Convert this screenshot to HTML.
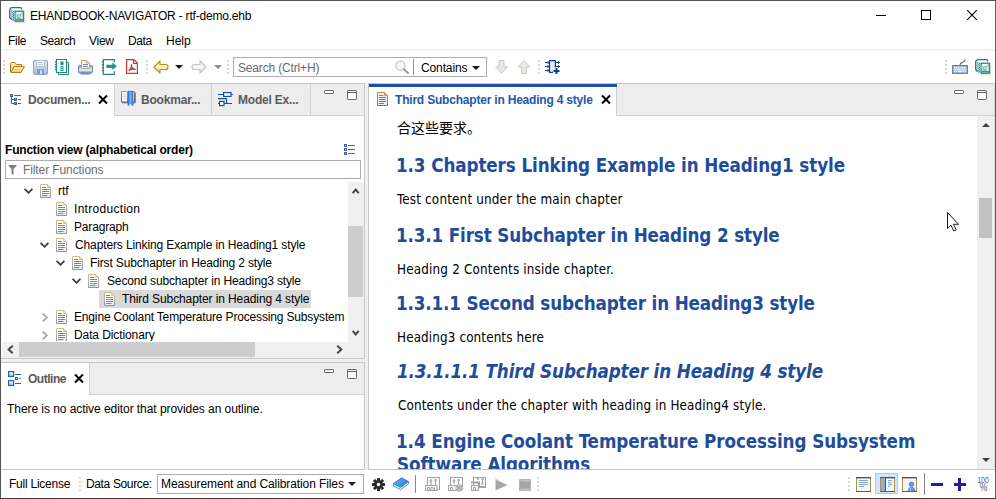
<!DOCTYPE html>
<html><head><meta charset="utf-8"><title>EHANDBOOK-NAVIGATOR - rtf-demo.ehb</title>
<style>
*{box-sizing:border-box;margin:0;padding:0}
html,body{width:996px;height:499px;overflow:hidden;background:#fff}
body{position:relative;font-family:"Liberation Sans","Noto Sans CJK SC",sans-serif;font-size:12px;color:#000}
.abs{position:absolute}
.t{position:absolute;white-space:nowrap;line-height:16px;height:16px;letter-spacing:-0.17px}
.tab{position:absolute;white-space:nowrap;line-height:16px;height:16px;font-weight:bold;font-size:12px;color:#5a5a5a;letter-spacing:-0.1px}
.hd{position:absolute;left:397px;white-space:nowrap;font-family:"DejaVu Sans Condensed","Liberation Sans",sans-serif;font-weight:bold;color:#1e4d9b;font-size:18.67px;line-height:23px;height:23px;letter-spacing:-0.12px}
.bd{position:absolute;left:397px;white-space:nowrap;font-family:"DejaVu Sans Condensed","Liberation Sans","Noto Sans CJK SC",sans-serif;font-size:13.33px;line-height:16px;height:16px;color:#000}
.sep{position:absolute;width:2px;height:15px;background-image:linear-gradient(#d9d9d9 50%,transparent 50%);background-size:2px 4px}
.hdr{position:absolute;background:#ededed}
.ln{position:absolute;background:#c6c6c6}
svg{position:absolute;overflow:visible}
.row{position:absolute;left:0;height:18px;width:345px}
#title{letter-spacing:-0.200px}
#m_file{letter-spacing:-0.280px;margin-left:-1.00px}
#m_search{letter-spacing:-0.460px}
#m_view{letter-spacing:-0.260px}
#m_data{letter-spacing:-0.360px}
#m_help{letter-spacing:-0.040px}
#srch{letter-spacing:-0.160px}
#cont{letter-spacing:-0.120px;margin-left:1.00px}
#tab1{letter-spacing:-0.220px}
#tab2{letter-spacing:-0.200px}
#tab3{letter-spacing:-0.200px}
#tab4{letter-spacing:-0.480px}
#edtab{letter-spacing:-0.200px}
#fv{letter-spacing:-0.200px}
#ff{letter-spacing:-0.100px}
#t_rtf{letter-spacing:-0.100px;margin-left:-1.00px}
#t_intro{letter-spacing:0.300px}
#t_para{letter-spacing:-0.160px}
#t_chap{letter-spacing:-0.120px;margin-left:1.00px}
#t_first{letter-spacing:-0.140px}
#t_second{letter-spacing:-0.140px;margin-left:1.00px}
#t_third{letter-spacing:-0.100px}
#t_eng{letter-spacing:-0.160px}
#t_data{letter-spacing:-0.100px}
#noed{letter-spacing:-0.060px}
#fl{letter-spacing:-0.240px}
#ds{letter-spacing:-0.360px}
#mc{letter-spacing:-0.100px}
#h1{letter-spacing:-0.100px;margin-left:-1.00px}
#h2{letter-spacing:-0.140px;margin-left:-1.00px}
#h3{letter-spacing:-0.140px;margin-left:-1.00px}
#h4{letter-spacing:-0.120px}
#h5{letter-spacing:-0.080px;margin-left:-1.00px}
#h6{letter-spacing:-0.100px}
#b1{letter-spacing:0.180px}
#b2{letter-spacing:0.180px}
#b3{letter-spacing:0.120px}
#b4{letter-spacing:0.140px;margin-left:1.00px}
</style></head><body>
<!-- window borders -->
<div class="abs" style="left:0;top:0;width:996px;height:1px;background:#555"></div>
<div class="abs" style="left:0;top:0;width:1px;height:499px;background:#555"></div>
<div class="abs" style="left:995px;top:0;width:1px;height:499px;background:#5e5e5e"></div>
<div class="abs" style="left:0;top:498px;width:996px;height:1px;background:#3c3c3c"></div>
<!-- TITLE BAR -->
<svg width="0" height="0"><defs><g id="appicon">
<path d="M12.600 2.600 V2 Q12.600 0.700 11.300 0.700 H3 Q0.700 0.700 0.700 3.200 V9.500 Q0.700 12.200 3.400 12.200" fill="none" stroke="#1a7f78" stroke-width="1.300"/>
<path d="M2.400 2.800 Q2 6 2.400 10.500" fill="none" stroke="#4fa79e" stroke-width="0.900"/>
<path d="M15.700 4 V15.700 H6" fill="none" stroke="#bdbdbd" stroke-width="0.800"/>
<rect x="4.600" y="3.300" width="10.600" height="12" fill="#fff"/>
<path d="M3.400 4 L5 4.800 L3.400 5.600 M3.400 6 L5 6.800 L3.400 7.600 M3.400 8 L5 8.800 L3.400 9.600 M3.400 10 L5 10.800 L3.400 11.600 M3.400 12 L5 12.800 L3.400 13.600" fill="#fff" stroke="#1a7f78" stroke-width="0.800"/>
<rect x="6.100" y="4.200" width="8.200" height="10" fill="#f4fbfa" stroke="#1a7f78" stroke-width="1.200"/>
<path d="M6.700 13.600 L9 9 L13.700 4.800 L13.700 7 L10.500 9.500 L13.700 13.600 Z" fill="#6dbdb3" opacity="0.750"/>
<path d="M6.700 5 L9.500 8.500 L6.700 13" fill="#9fd6ce" opacity="0.800"/>
<circle cx="10" cy="9.200" r="1.400" fill="#e9f7f4" stroke="#3ea195" stroke-width="0.700"/>
<path d="M6.500 12.800 H14" stroke="#1a7f78" stroke-width="1.100"/>
</g></defs></svg>
<svg id="app1" style="left:9px;top:7px" width="16" height="16" viewBox="0 0 16 16"><use href="#appicon"/></svg>

<div id="title" class="t" style="left:30px;top:8px">EHANDBOOK-NAVIGATOR - rtf-demo.ehb</div>
<svg style="left:876px;top:15px" width="10" height="1"><rect x="0" y="0" width="10" height="1" fill="#000"/></svg>
<svg style="left:921px;top:10px" width="10" height="10"><rect x="0.500" y="0.500" width="9" height="9" fill="none" stroke="#000" stroke-width="1"/></svg>
<svg style="left:967px;top:10px" width="10" height="10"><path d="M0.200 0.200 L9.800 9.800 M9.800 0.200 L0.200 9.800" stroke="#000" stroke-width="1.100" fill="none"/></svg>
<!-- MENU -->
<div class="t" id="m_file" style="left:9px;top:33px">File</div>
<div class="t" id="m_search" style="left:40px;top:33px">Search</div>
<div class="t" id="m_view" style="left:89px;top:33px">View</div>
<div class="t" id="m_data" style="left:128px;top:33px">Data</div>
<div class="t" id="m_help" style="left:166px;top:33px">Help</div>
<div class="abs" style="left:2px;top:49px;width:992px;height:2px;background:#f0f0f0"></div>

<!-- TOOLBAR -->
<div class="sep" style="left:3px;top:60px"></div>
<svg id="tb-open" style="left:10px;top:62px" width="15" height="11" viewBox="0 0 15 11"><defs><linearGradient id="gfo" x1="0" y1="0" x2="0" y2="1"><stop offset="0" stop-color="#fdf0c0"/><stop offset="1" stop-color="#f5c766"/></linearGradient></defs><path d="M0.5 10 V1.5 Q0.5 0.5 1.5 0.5 H5 L6.5 2.5 H11.5 V5" fill="url(#gfo)" stroke="#b8761f"/><path d="M0.8 10.5 L4 4.5 H14.5 L11 10.5 Z" fill="url(#gfo)" stroke="#b8761f" stroke-linejoin="round"/></svg>
<svg id="tb-save" style="left:33px;top:60px" width="15" height="15" viewBox="0 0 15 15"><defs><linearGradient id="gsv" x1="0" y1="0" x2="0" y2="1"><stop offset="0" stop-color="#e3e9f6"/><stop offset="1" stop-color="#a9b9dc"/></linearGradient></defs><rect x="0.5" y="0.5" width="14" height="14" rx="1.5" fill="url(#gsv)" stroke="#8c9fc9"/><rect x="3.5" y="0.5" width="8" height="6" fill="#f3f5f8" stroke="#b7bfcf"/><path d="M5 2.5 H10 M5 4.5 H10" stroke="#c4cad6"/><rect x="4.5" y="9.500" width="6" height="5" fill="#7f95cf" stroke="#8c9fc9"/><rect x="7" y="10.500" width="2" height="3.500" fill="#dfe6f5"/></svg>
<svg id="tb-nb" style="left:54px;top:59px" width="15" height="16" viewBox="0 0 15 16"><path d="M4.500 3.500 H14.500 V15.500 H4.500 Z" fill="#fff" stroke="#1f8a80"/><path d="M2.500 0.500 H12.500 V13.500 H2.500 Z" fill="#fff" stroke="#1f8a80" stroke-width="1.200"/><path d="M1 3 H3 M1 5.500 H3 M1 8 H3 M1 10.500 H3" stroke="#1f8a80" stroke-width="1.300"/><rect x="6.500" y="2.500" width="3" height="3.500" fill="#1f8a80"/><rect x="6.500" y="7" width="3" height="5" fill="#2a9a8e"/><path d="M7 8.500 H9 M7 10.500 H9" stroke="#d0eeea" stroke-width="0.800"/></svg>
<svg id="tb-print" style="left:78px;top:60px" width="15" height="15" viewBox="0 0 15 15"><defs><linearGradient id="gpr" x1="0" y1="0" x2="0" y2="1"><stop offset="0" stop-color="#7a96d2"/><stop offset="0.600" stop-color="#eef2fa"/><stop offset="1" stop-color="#6f8bc9"/></linearGradient></defs><path d="M0.500 6.500 Q0.500 5.500 1.500 5.500 H13.500 Q14.500 5.500 14.500 6.500 V12 Q14.500 13 13.500 13 H1.500 Q0.500 13 0.500 12 Z" fill="url(#gpr)" stroke="#6c88c6"/><path d="M2 13.200 H13 L12 14.600 H3 Z" fill="#5f7cc0"/><path d="M3.500 8.500 V0.500 H8.500 L11.500 3 V8.500 Z" fill="#fcfcfc" stroke="#c2a463"/><path d="M8.500 0.500 V3 H11.500" fill="#f2e6c4" stroke="#c2a463"/><path d="M5 4.500 H10 M5 6.500 H10" stroke="#6c88c6" stroke-width="1.200"/></svg>
<svg id="tb-exp" style="left:101px;top:59px" width="16" height="16" viewBox="0 0 16 16"><path d="M13.200 3.500 V0.700 H2.300 V15.300 H13.200 V12" fill="#fff" stroke="#1f8a80" stroke-width="1.200"/><path d="M0.800 3 H3 M0.800 5.800 H3 M0.800 8.600 H3 M0.800 11.400 H3" stroke="#1f8a80" stroke-width="1.400"/><path d="M5.300 5.700 H11.300 V3.600 L16 7.300 L11.300 11 V8.900 H5.300 Z" fill="#2a958b"/></svg>
<svg id="tb-pdf" style="left:126px;top:59px" width="12" height="15" viewBox="0 0 12 15"><path d="M0.600 0.600 H8 L11.400 4 V14.400 H0.600 Z" fill="#fff" stroke="#c9393c" stroke-width="1.200"/><path d="M7.600 0.600 V4.400 H11.400" fill="none" stroke="#c9393c" stroke-width="1.200"/><path d="M5.600 5.600 Q6.200 8.600 3 11.600 M5.800 8.400 Q7 10 9.300 10.300 M3.300 11.300 Q6 9.700 9 10.300" fill="none" stroke="#c9393c" stroke-width="1.300" stroke-linecap="round"/></svg>
<div class="sep" style="left:146px;top:60px"></div>
<svg id="tb-back" style="left:153px;top:60px" width="16" height="14" viewBox="0 0 16 14"><defs><linearGradient id="gbk" x1="0" y1="0" x2="0" y2="1"><stop offset="0" stop-color="#fffdf0"/><stop offset="0.500" stop-color="#fff3b8"/><stop offset="1" stop-color="#fbd96a"/></linearGradient></defs><path d="M7 1 L1 7 L7 13 V9.500 H13 Q15 9.500 15 7 Q15 4.500 13 4.500 H7 Z" fill="url(#gbk)" stroke="#c98a1c" stroke-width="1.200" stroke-linejoin="round"/></svg>
<svg style="left:175px;top:65px" width="8" height="4"><path d="M0 0 H8 L4 4 Z" fill="#1a1a1a"/></svg>
<svg id="tb-fwd" style="left:191px;top:60px" width="16" height="14" viewBox="0 0 16 14"><path d="M9 1 L15 7 L9 13 V9.500 H3 Q1 9.500 1 7 Q1 4.500 3 4.500 H9 Z" fill="#f6f6f6" stroke="#c4c4c4" stroke-width="1.200" stroke-linejoin="round"/></svg>
<svg style="left:214px;top:65px" width="8" height="4"><path d="M0 0 H8 L4 4 Z" fill="#8a8a8a"/></svg>
<div class="sep" style="left:227px;top:60px"></div>
<!-- search box -->
<div class="abs" style="left:233px;top:57px;width:254px;height:20px;border:1px solid #aaacb2;background:#fff"></div>
<div class="t" id="srch" style="left:238px;top:60px;color:#6a6a6a">Search (Ctrl+H)</div>
<svg id="tb-mag" style="left:395px;top:60px" width="14" height="14" viewBox="0 0 14 14"><circle cx="5.400" cy="5.600" r="4.700" fill="#f7f7f7" stroke="#c2c2c2" stroke-width="1.100"/><path d="M9 9.200 L13 13" stroke="#9a9a9a" stroke-width="1.900" stroke-linecap="round"/></svg>
<div class="abs" style="left:413px;top:59px;width:1px;height:16px;background:#8c8c8c"></div>
<div class="t" id="cont" style="left:420px;top:60px">Contains</div>
<svg style="left:472px;top:66px" width="8" height="4"><path d="M0 0 H8 L4 4 Z" fill="#1a1a1a"/></svg>
<svg id="tb-down" style="left:495px;top:60px" width="13" height="14" viewBox="0 0 13 14"><path d="M4 0.600 H9 V7 H12.300 L6.500 13.300 L0.700 7 H4 Z" fill="#e9e9e4" stroke="#c9c9c4" stroke-width="1" stroke-linejoin="round"/></svg>
<svg id="tb-up" style="left:517px;top:60px" width="14" height="14" viewBox="0 0 14 14"><path d="M4.500 13.400 H9.500 V7 H13.300 L7 0.700 L0.700 7 H4.500 Z" fill="#e9e9e4" stroke="#c9c9c4" stroke-width="1" stroke-linejoin="round"/></svg>
<div class="sep" style="left:538px;top:60px"></div>
<svg id="tb-chip" style="left:545px;top:60px" width="15" height="15" viewBox="0 0 15 15"><defs><linearGradient id="gch" x1="0" y1="0" x2="1" y2="0"><stop offset="0" stop-color="#ffffff"/><stop offset="1" stop-color="#cfdcf0"/></linearGradient></defs><path d="M8 12.400 H4.600 V0.600 H10.400 V7.500" fill="url(#gch)" stroke="#0f3f8f" stroke-width="1.200"/><path d="M0 2.500 H4 M0 6.500 H4 M0 10.500 H4 M11 2.500 H15 M11 6.500 H15" stroke="#0f3f8f" stroke-width="1"/><path d="M2.500 1 L4 2.500 L2.500 4 M2.500 5 L4 6.500 L2.500 8 M2.500 9 L4 10.500 L2.500 12 M13 1 L14.500 2.500 L13 4 M13 5 L14.500 6.500 L13 8" fill="none" stroke="#0f3f8f" stroke-width="0.900"/><path d="M8.500 11 H14.500 M11.500 8 V14" stroke="#0f3f8f" stroke-width="2"/></svg>
<!-- right -->
<div class="sep" style="left:945px;top:60px"></div>
<svg id="tb-kbd" style="left:952px;top:59px" width="16" height="15" viewBox="0 0 16 15"><path d="M8 6.500 Q8 4 10.500 3.300 Q12.800 2.600 13.500 0.400" fill="none" stroke="#66798f" stroke-width="1.200"/><rect x="0.600" y="6.600" width="14.800" height="7.800" fill="#b6c6de" stroke="#6c8099" stroke-width="1.200"/><path d="M2 8.500 H14" stroke="#f4f7fb" stroke-width="1" stroke-dasharray="1.300 0.700"/><path d="M2 10.500 H4 M4.700 10.500 H5.700 M6.700 10.500 H8.700 M9.700 10.500 H10.700 M11.700 10.500 H14" stroke="#f4f7fb" stroke-width="1"/><path d="M2 12.500 H3 M4 12.500 H5 M6 12.500 H10 M11 12.500 H12 M13 12.500 H14" stroke="#f4f7fb" stroke-width="1"/></svg>
<svg id="tb-app" style="left:975px;top:59px" width="16" height="16" viewBox="0 0 16 16"><use href="#appicon"/></svg>

<!-- LEFT PANEL -->
<div class="ln" style="left:1px;top:83px;width:364px;height:1px"></div>
<div class="ln" style="left:364px;top:83px;width:1px;height:276px"></div>
<div class="ln" style="left:1px;top:358px;width:364px;height:1px"></div>
<div class="abs" style="left:365px;top:84px;width:3px;height:386px;background:#f0f0f0"></div>
<div class="abs" style="left:1px;top:359px;width:364px;height:4px;background:#f0f0f0"></div>
<div class="hdr" style="left:115px;top:84px;width:249px;height:31px"></div>
<div class="ln" style="left:114px;top:84px;width:1px;height:32px;background:#d0d0d0"></div>
<div class="ln" style="left:114px;top:115px;width:250px;height:1px;background:#d0d0d0"></div>
<div class="ln" style="left:211px;top:84px;width:1px;height:31px;background:#d0d0d0"></div>
<div class="ln" style="left:310px;top:84px;width:1px;height:31px;background:#d0d0d0"></div>
<!-- tab icons -->
<svg id="ic-doctree" style="left:10px;top:94px" width="11" height="11" viewBox="0 0 11 11"><g fill="#8ea4cf" stroke="#3f5f9f" stroke-width="1"><path d="M1.500 3 V9.500 H4.500 M1.500 5.500 H4.500 M4.200 1.500 H11 M8 5.500 H11 M8 9.500 H11" fill="none"/><rect x="0.500" y="0.500" width="2" height="2"/><rect x="4.500" y="4.500" width="2" height="2"/><rect x="4.500" y="8.500" width="2" height="2"/></g></svg>
<div class="tab" id="tab1" style="left:28px;top:92px">Documen...</div>
<svg style="left:98px;top:95px" width="10" height="9" viewBox="0 0 10 9"><path d="M1 0.5 L9 8.5 M9 0.5 L1 8.5" stroke="#000" stroke-width="2" fill="none"/></svg>
<svg id="ic-book" style="left:121px;top:91px" width="15" height="15" viewBox="0 0 15 15"><defs><linearGradient id="gbk2" x1="0" y1="0" x2="0" y2="1"><stop offset="0" stop-color="#a8904e"/><stop offset="1" stop-color="#4a5470"/></linearGradient><linearGradient id="grb" x1="0" y1="0" x2="1" y2="0"><stop offset="0" stop-color="#2f7be0"/><stop offset="0.500" stop-color="#6db3fa"/><stop offset="1" stop-color="#2f7be0"/></linearGradient></defs><path d="M0.500 0.500 H4.500 Q6 0.500 7 2 V12 Q6 11 4.500 11 H0.500 Z" fill="#fbfcfe" stroke="url(#gbk2)"/><path d="M7 2 Q8 0.500 9.500 0.500 H13.500 V11 H9.500 Q8 11 7 12 Z" fill="#fbfcfe" stroke="url(#gbk2)"/><path d="M14.300 1.500 V11.800 H9" fill="none" stroke="#4a5470" stroke-width="0.800"/><path d="M1.200 11.800 H6" fill="none" stroke="#4a5470" stroke-width="0.900"/><path d="M2.200 3.500 H5.500 M2.200 5.500 H5.500 M2.200 7.500 H5.500" stroke="#c9d3e2" stroke-width="0.900"/><path d="M7 0.300 H12 V14.700 L9.500 12.300 L7 14.700 Z" fill="url(#grb)" stroke="#1f62c8" stroke-width="0.600"/></svg>
<div class="tab" id="tab2" style="left:141px;top:92px">Bookmar...</div>
<svg id="ic-model" style="left:218px;top:92px" width="15" height="14" viewBox="0 0 15 14"><g fill="none" stroke="#1450a0" stroke-width="1.200"><rect x="5.600" y="0.600" width="7.400" height="3.800" fill="#fff"/><path d="M0 2.500 H5.600 M13 2.500 H15 M0 6.600 H8.500 V11.500 M6 11.500 H14 M0 11.500 H1.600"/><rect x="1.600" y="9.400" width="4.400" height="4.200" fill="#fff"/></g></svg>
<div class="tab" id="tab3" style="left:238px;top:92px">Model Ex...</div>
<svg style="left:324px;top:90px" width="10" height="4"><rect x="-0.500" y="-0.500" width="11" height="5" rx="1" fill="#f8f8f8"/><rect x="0.500" y="0.500" width="9" height="3" rx="0.600" fill="#fff" stroke="#646464"/></svg>
<svg style="left:347px;top:90px" width="10" height="10"><rect x="-0.500" y="-0.500" width="11" height="11" rx="1" fill="#f8f8f8"/><rect x="0.500" y="0.500" width="9" height="9" rx="0.600" fill="#fff" stroke="#646464"/><path d="M0.500 2.500 H9.500" stroke="#646464"/></svg>
<!-- heading -->
<div class="t" id="fv" style="left:5px;top:142px;font-weight:bold">Function view (alphabetical order)</div>
<svg id="ic-list" style="left:344px;top:144px" width="12" height="11" viewBox="0 0 12 11"><rect x="0.5" y="0.5" width="2" height="2" fill="#a9b9dc" stroke="#4161a4"/><rect x="0.5" y="4.5" width="2" height="2" fill="#a9b9dc" stroke="#4161a4"/><rect x="0.5" y="8.5" width="2" height="2" fill="#a9b9dc" stroke="#4161a4"/><path d="M4 1.500 H11 M4 5.500 H11 M4 9.500 H11" stroke="#4a68a8"/></svg>
<!-- filter box -->
<div class="abs" style="left:5px;top:160px;width:356px;height:19px;border:1px solid #aaacb2;background:#fff"></div>
<svg style="left:8px;top:165px" width="9" height="10" viewBox="0 0 9 10"><path d="M0 0 H9 L5.5 4 V10 L3.5 8.5 V4 Z" fill="#7a7a7a"/></svg>
<div class="t" id="ff" style="left:23px;top:162px;color:#6d6d6d">Filter Functions</div>
<!-- tree -->
<div id="tree" class="abs" style="left:2px;top:181px;width:345px;height:160px;overflow:hidden">
<div class="abs" style="left:97px;top:109px;width:212px;height:18px;background:#d9d9d9"></div>
<div class="t" id="t_rtf" style="left:57px;top:2px">rtf</div>
<div class="t" id="t_intro" style="left:72px;top:20px">Introduction</div>
<div class="t" id="t_para" style="left:72px;top:38px">Paragraph</div>
<div class="t" id="t_chap" style="left:72px;top:56px">Chapters Linking Example in Heading1 style</div>
<div class="t" id="t_first" style="left:88px;top:74px">First Subchapter in Heading 2 style</div>
<div class="t" id="t_second" style="left:104px;top:92px">Second subchapter in Heading3 style</div>
<div class="t" id="t_third" style="left:120px;top:110px">Third Subchapter in Heading 4 style</div>
<div class="t" id="t_eng" style="left:72px;top:128px">Engine Coolant Temperature Processing Subsystem</div>
<div class="t" id="t_data" style="left:72px;top:146px">Data Dictionary</div>
<svg width="0" height="0"><defs>
<g id="doc"><linearGradient id="gdoc" x1="0" y1="0" x2="0" y2="1"><stop offset="0" stop-color="#cdbd8e"/><stop offset="0.55" stop-color="#b5ad9a"/><stop offset="1" stop-color="#8496b8"/></linearGradient><linearGradient id="gdocf" x1="0" y1="0" x2="0" y2="1"><stop offset="0.6" stop-color="#ffffff"/><stop offset="1" stop-color="#dfe7f5"/></linearGradient><path d="M0.5 0.5 H7.5 L10.5 3.5 V13.5 H0.5 Z" fill="url(#gdocf)" stroke="url(#gdoc)"/><path d="M7.5 0.5 V3.5 H10.5 Z" fill="#ecdca8" stroke="#d1c08c" stroke-width="0.8"/><path d="M2 3.5 H6 M2 5.5 H9 M2 7.5 H9 M2 9.5 H9 M2 11.5 H7.500" stroke="#6a88bf"/></g>
<path id="chd" d="M0.600 0.800 L4.500 4.800 L8.400 0.800" fill="none" stroke="#3c3c3c" stroke-width="1.800"/>
<path id="chr" d="M0.800 0.600 L4.800 4.500 L0.800 8.400" fill="none" stroke="#a2a2a2" stroke-width="1.700"/>
</defs></svg>
<svg style="left:38px;top:3px" width="11" height="14"><use href="#doc"/></svg>
<svg style="left:54px;top:21px" width="11" height="14"><use href="#doc"/></svg>
<svg style="left:54px;top:39px" width="11" height="14"><use href="#doc"/></svg>
<svg style="left:54px;top:57px" width="11" height="14"><use href="#doc"/></svg>
<svg style="left:70px;top:75px" width="11" height="14"><use href="#doc"/></svg>
<svg style="left:86px;top:93px" width="11" height="14"><use href="#doc"/></svg>
<svg style="left:102px;top:111px" width="11" height="14"><use href="#doc"/></svg>
<svg style="left:54px;top:129px" width="11" height="14"><use href="#doc"/></svg>
<svg style="left:54px;top:147px" width="11" height="14"><use href="#doc"/></svg>
<svg style="left:22px;top:7px" width="9" height="6"><use href="#chd"/></svg>
<svg style="left:38px;top:61px" width="9" height="6"><use href="#chd"/></svg>
<svg style="left:54px;top:79px" width="9" height="6"><use href="#chd"/></svg>
<svg style="left:70px;top:97px" width="9" height="6"><use href="#chd"/></svg>
<svg style="left:40px;top:132px" width="6" height="9"><use href="#chr"/></svg>
<svg style="left:40px;top:150px" width="6" height="9"><use href="#chr"/></svg>
</div>
<!-- tree scrollbars -->
<div class="abs" style="left:348px;top:182px;width:16px;height:176px;background:#f0f0f0"></div>
<div class="abs" style="left:2px;top:342px;width:362px;height:16px;background:#f0f0f0"></div>
<div class="abs" style="left:348px;top:226px;width:15px;height:71px;background:#cdcdcd"></div>
<div class="abs" style="left:19px;top:342px;width:236px;height:14.500px;background:#cdcdcd"></div>
<svg style="left:352px;top:188px" width="8" height="6"><path d="M0.700 5.200 L3.700 1.600 L6.700 5.200" fill="none" stroke="#484848" stroke-width="2"/></svg>
<svg style="left:352px;top:330px" width="8" height="6"><path d="M0.700 0.800 L3.700 4.400 L6.700 0.800" fill="none" stroke="#484848" stroke-width="2"/></svg>
<svg style="left:7px;top:345px" width="7" height="9"><path d="M5.800 0.700 L1.600 4.500 L5.800 8.300" fill="none" stroke="#484848" stroke-width="2"/></svg>
<svg style="left:336px;top:345px" width="7" height="9"><path d="M1.200 0.700 L5.400 4.500 L1.200 8.300" fill="none" stroke="#484848" stroke-width="2"/></svg>

<!-- OUTLINE -->
<div class="ln" style="left:1px;top:362px;width:364px;height:1px"></div>
<div class="ln" style="left:364px;top:362px;width:1px;height:108px"></div>
<div class="ln" style="left:1px;top:469px;width:364px;height:1px"></div>
<div class="hdr" style="left:90px;top:363px;width:274px;height:31px"></div>
<div class="ln" style="left:89px;top:363px;width:1px;height:32px;background:#d0d0d0"></div>
<div class="ln" style="left:89px;top:394px;width:275px;height:1px;background:#d0d0d0"></div>
<svg id="ic-outline" style="left:8px;top:371px" width="14" height="15" viewBox="0 0 14 15"><defs><linearGradient id="gol" x1="0" y1="0" x2="0" y2="1"><stop offset="0" stop-color="#ffffff"/><stop offset="1" stop-color="#9cc4f4"/></linearGradient></defs><g stroke="#1c62b4" stroke-width="1.200"><rect x="0.600" y="0.600" width="5" height="4.800" fill="url(#gol)"/><rect x="0.600" y="9.700" width="5" height="4.800" fill="url(#gol)"/><rect x="7.500" y="6.500" width="2" height="2" fill="#fff" stroke-width="1"/><path d="M7 3.500 H13 M11.300 7.500 H13 M7 12.500 H13" stroke-width="1.100"/></g></svg>
<div class="tab" id="tab4" style="left:28px;top:371px">Outline</div>
<svg style="left:74px;top:374px" width="10" height="9" viewBox="0 0 10 9"><path d="M1 0.5 L9 8.5 M9 0.5 L1 8.5" stroke="#000" stroke-width="2" fill="none"/></svg>
<svg style="left:324px;top:369px" width="10" height="4"><rect x="-0.500" y="-0.500" width="11" height="5" rx="1" fill="#f8f8f8"/><rect x="0.500" y="0.500" width="9" height="3" rx="0.600" fill="#fff" stroke="#646464"/></svg>
<svg style="left:347px;top:369px" width="10" height="10"><rect x="-0.500" y="-0.500" width="11" height="11" rx="1" fill="#f8f8f8"/><rect x="0.500" y="0.500" width="9" height="9" rx="0.600" fill="#fff" stroke="#646464"/><path d="M0.500 2.500 H9.500" stroke="#646464"/></svg>
<div class="t" id="noed" style="left:7px;top:401px">There is no active editor that provides an outline.</div>

<!-- EDITOR -->
<div class="ln" style="left:368px;top:83px;width:627px;height:1px"></div>
<div class="ln" style="left:368px;top:83px;width:1px;height:387px"></div>
<div class="ln" style="left:994px;top:83px;width:1px;height:387px;background:#d8d8d8"></div>
<div class="ln" style="left:368px;top:469px;width:627px;height:1px"></div>
<div class="hdr" style="left:369px;top:84px;width:625px;height:31px"></div>
<div class="ln" style="left:369px;top:115px;width:625px;height:1px;background:#d0d0d0"></div>
<!-- active tab -->
<div class="abs" style="left:369px;top:84px;width:248px;height:33px;background:#fff"></div>
<div class="abs" style="left:369px;top:84px;width:248px;height:3px;background:#1d4fa3"></div>
<div class="ln" style="left:616px;top:87px;width:1px;height:29px;background:#d0d0d0"></div>
<svg id="ed-doc" style="left:377px;top:92px" width="11" height="14" viewBox="0 0 11 14"><defs><linearGradient id="ged" x1="0" y1="0" x2="0" y2="1"><stop offset="0" stop-color="#b8943e"/><stop offset="1" stop-color="#8a7446"/></linearGradient></defs><path d="M0.500 0.500 H7.500 L10.500 3.500 V13.500 H0.500 Z" fill="#eef2fa" stroke="url(#ged)"/><path d="M7.500 0.500 V3.500 H10.500 Z" fill="#e3c878" stroke="#b8943e" stroke-width="0.800"/><path d="M2 3.500 H6 M2 5.500 H9 M2 7.500 H9 M2 9.500 H9 M2 11.500 H7" stroke="#5f7fc0"/></svg>
<div class="tab" id="edtab" style="left:395px;top:92px;color:#2257a8">Third Subchapter in Heading 4 style</div>
<svg style="left:601px;top:95px" width="10" height="9" viewBox="0 0 10 9"><path d="M1 0.5 L9 8.5 M9 0.5 L1 8.5" stroke="#000" stroke-width="2" fill="none"/></svg>
<!-- min / max -->
<svg style="left:954px;top:90px" width="10" height="4"><rect x="-0.500" y="-0.500" width="11" height="5" rx="1" fill="#f8f8f8"/><rect x="0.500" y="0.500" width="9" height="3" rx="0.600" fill="#fff" stroke="#646464"/></svg>
<svg style="left:977px;top:90px" width="10" height="10"><rect x="-0.500" y="-0.500" width="11" height="11" rx="1" fill="#f8f8f8"/><rect x="0.500" y="0.500" width="9" height="9" rx="0.600" fill="#fff" stroke="#646464"/><path d="M0.500 2.500 H9.500" stroke="#646464"/></svg>
<!-- content -->
<div id="edcontent" class="abs" style="left:369px;top:116px;width:608px;height:353px;overflow:hidden;background:#fff">
</div>
<div class="bd" id="cn" style="top:120px;font-size:14px;line-height:17px;height:17px">合这些要求。</div>
<div class="hd" id="h1" style="top:154px">1.3 Chapters Linking Example in Heading1 style</div>
<div class="bd" id="b1" style="top:192px">Test content under the main chapter</div>
<div class="hd" id="h2" style="top:224px">1.3.1 First Subchapter in Heading 2 style</div>
<div class="bd" id="b2" style="top:262px">Heading 2 Contents inside chapter.</div>
<div class="hd" id="h3" style="top:292px">1.3.1.1 Second subchapter in Heading3 style</div>
<div class="bd" id="b3" style="top:330px">Heading3 contents here</div>
<div class="hd" id="h4" style="top:360px;font-style:italic">1.3.1.1.1 Third Subchapter in Heading 4 style</div>
<div class="bd" id="b4" style="top:398px">Contents under the chapter with heading in Heading4 style.</div>
<div class="abs" style="left:369px;top:425px;width:608px;height:44px;overflow:hidden">
<div class="hd" id="h5" style="left:28px;top:5px">1.4 Engine Coolant Temperature Processing Subsystem</div>
<div class="hd" id="h6" style="left:28px;top:28px">Software Algorithms</div>
</div>
<!-- scrollbar -->
<div class="abs" style="left:977px;top:116px;width:17px;height:353px;background:#f0f0f0"></div>
<div class="abs" style="left:979px;top:198px;width:13px;height:40px;background:#c1c1c1"></div>
<svg style="left:982px;top:123px" width="8" height="4"><path d="M0 4 L4 0 L8 4 Z" fill="#404040"/></svg>
<svg style="left:982px;top:458px" width="8" height="4"><path d="M0 0 L4 4 L8 0 Z" fill="#404040"/></svg>
<!-- mouse cursor -->
<svg style="left:947px;top:212px" width="13" height="20" viewBox="0 0 13 20"><path d="M0.5 0.5 V16.5 L4 13.2 L6.8 19 L9.2 18 L6.5 12.3 H11.5 Z" fill="#fff" stroke="#1a1a2e" stroke-width="1"/></svg>

<!-- STATUS BAR -->
<div class="t" id="fl" style="left:9px;top:476px">Full License</div>
<div class="sep" style="left:79px;top:477px"></div>
<div class="t" id="ds" style="left:86px;top:476px">Data Source:</div>
<div class="abs" style="left:157px;top:474px;width:207px;height:20px;border:1px solid #aaacb2;background:#fff"></div>
<div class="t" id="mc" style="left:161px;top:476px">Measurement and Calibration Files</div>
<svg style="left:348px;top:482px" width="8" height="4"><path d="M0 0 H8 L4 4 Z" fill="#1a1a1a"/></svg>
<svg id="st-gear" style="left:372px;top:478px" width="13" height="13" viewBox="0 0 13 13"><g fill="#2b2b2b"><circle cx="6.500" cy="6.500" r="4.300"/><rect x="5" y="0" width="3" height="13" rx="0.500"/><rect x="0" y="5" width="13" height="3" rx="0.500"/><rect x="5" y="0" width="3" height="13" rx="0.500" transform="rotate(45 6.500 6.500)"/><rect x="5" y="0" width="3" height="13" rx="0.500" transform="rotate(-45 6.500 6.500)"/></g><circle cx="6.500" cy="6.500" r="1.700" fill="#fff"/></svg>
<svg id="st-cube" style="left:393px;top:477px" width="16" height="13" viewBox="0 0 16 13"><defs><linearGradient id="gcb" x1="0" y1="0" x2="1" y2="1"><stop offset="0" stop-color="#6fb4f2"/><stop offset="1" stop-color="#1f6fd0"/></linearGradient></defs><path d="M0.500 6.500 L8.500 0.700 L15.500 4.500 V7 L7.500 12.500 L0.500 9 Z" fill="url(#gcb)" stroke="#2a66c0" stroke-width="0.800" stroke-linejoin="round"/><path d="M0.800 8.300 L7.500 11.500 L15.300 6" fill="none" stroke="#e8f0fb" stroke-width="1.100"/><path d="M3 5.500 L4.500 4.500 M8 2 L9 1.600 M12.500 5.500 L13.500 6.200 M9 9.500 L10 10" stroke="#36c04a" stroke-width="1.200"/></svg>
<div class="abs" style="left:415px;top:475px;width:1px;height:18px;background:#8a8a8a"></div>
<svg id="st-g1" style="left:425px;top:477px" width="15" height="14" viewBox="0 0 15 14"><g fill="none" stroke="#a2a2a2"><rect x="2.500" y="0.500" width="12" height="12"/><path d="M6 2 V8 M10.500 2 V8 M4.500 4 H7.500 M9 3 H12" stroke-width="1.200"/><rect x="0.500" y="8.500" width="11.500" height="5" fill="#fff"/><path d="M2.500 13 V10.500 H4.500 V13 M6 13 V10.500 H8 V13 M9.500 13 V10.500" /></g></svg>
<svg id="st-g2" style="left:448px;top:477px" width="15" height="15" viewBox="0 0 15 15"><g fill="none" stroke="#a2a2a2"><rect x="2.500" y="0.500" width="12" height="12"/><path d="M6 2 V7 M10.500 2 V7 M4.500 4 H7.500 M9 3 H12" stroke-width="1.200"/><rect x="0.500" y="8.500" width="8" height="5" fill="#fff"/><path d="M2.500 13 V10.500 H4.500 V13"/><circle cx="11" cy="11" r="3.300" fill="#e4e4e4"/><path d="M9 9 L13 13 M13 9 L9 13" stroke-width="1.300"/></g></svg>
<svg id="st-g3" style="left:471px;top:477px" width="15" height="14" viewBox="0 0 15 14"><g fill="none" stroke="#a2a2a2"><rect x="2.500" y="0.500" width="12" height="9"/><path d="M6 2.500 L7 1.500 L8 2.500 M11.500 2 V7 M10 2 H13 M10 7 H13" stroke-width="1.100"/><path d="M0 5.500 H8 V10 H15" stroke-width="2"/><rect x="0.500" y="8.500" width="7" height="5" fill="#fff"/><path d="M2.500 13 V10.500 H4.500 V13"/></g></svg>
<svg id="st-play" style="left:495px;top:479px" width="13" height="12" viewBox="0 0 13 12"><path d="M0.500 0.500 L12.500 6 L0.500 11.500 Z" fill="#a6a6a6"/><path d="M0.500 0.500 H2.500 L3.500 2" fill="none" stroke="#c8c8c8"/></svg>
<svg id="st-stop" style="left:519px;top:479px" width="12" height="12" viewBox="0 0 12 12"><rect x="0.500" y="0.500" width="11" height="11" fill="#a6a6a6" stroke="#b4b4b4"/><path d="M1.500 1.800 H10.500" stroke="#e0e0e0" stroke-width="0.800"/><path d="M1.500 10.300 H10.500" stroke="#e0e0e0" stroke-width="0.800"/></svg>
<div class="sep" style="left:537px;top:477px"></div>
<!-- right -->
<div class="sep" style="left:848px;top:477px"></div>
<svg width="0" height="0"><defs><g id="vfr"><rect x="0.500" y="0.500" width="14" height="14" fill="#f1f9fb" stroke="#b08f4e"/><path d="M0 0.700 H15" stroke="#5c5347" stroke-width="1.400"/><path d="M0 14.500 H15" stroke="#6e5a30" stroke-width="1"/></g></defs></svg>
<svg id="st-v1" style="left:856px;top:477px" width="15" height="15" viewBox="0 0 15 15"><use href="#vfr"/><path d="M3 3.500 H12 M3 5.500 H12 M3 7.500 H12 M3 9.500 H8" stroke="#86a3d8"/></svg>
<div class="abs" style="left:875px;top:473px;width:23px;height:21px;background:#cce8ff;border:1px solid #99d1ff"></div>
<svg id="st-v2" style="left:880px;top:477px" width="15" height="15" viewBox="0 0 15 15"><use href="#vfr"/><rect x="1" y="1.400" width="4" height="12.600" fill="#8fa9dc"/><path d="M5.500 1 V14" stroke="#5a5448"/><path d="M8 3.500 H12 M8 5.500 H11.500 M8 7.500 H12 M8 9.500 H10" stroke="#86a3d8"/></svg>
<svg id="st-v3" style="left:902px;top:477px" width="15" height="15" viewBox="0 0 15 15"><use href="#vfr"/><circle cx="9.500" cy="7.300" r="2.300" fill="#6f96dc" stroke="#4a74c4" stroke-width="0.700"/><path d="M6.200 14 Q6.200 10.200 9.500 10.200 Q12.800 10.200 12.800 14 Z" fill="#6f96dc" stroke="#4a74c4" stroke-width="0.700"/><path d="M8.300 11 V14" stroke="#b9cdf0" stroke-width="1.200"/></svg>
<div class="abs" style="left:924px;top:473px;width:1px;height:22px;background:#8a8a8a"></div>
<div class="abs" style="left:931px;top:483px;width:12px;height:3px;background:#1a1ea8"></div>
<div class="abs" style="left:954px;top:483px;width:12px;height:3px;background:#1a1ea8"></div>
<div class="abs" style="left:958px;top:478px;width:3px;height:13px;background:#1a1ea8"></div>
<div class="abs" id="pct" style="left:973px;top:476px;width:20px;height:8px;font-size:8.800px;line-height:8px;color:#606060;text-align:center;transform:scaleX(0.800);transform-origin:50% 50%">100</div>
<div class="abs" id="pct2" style="left:974px;top:483px;width:19px;height:9px;font-size:10px;line-height:9px;color:#606060;text-align:center;transform:scaleX(0.850)">%</div>

</body></html>
